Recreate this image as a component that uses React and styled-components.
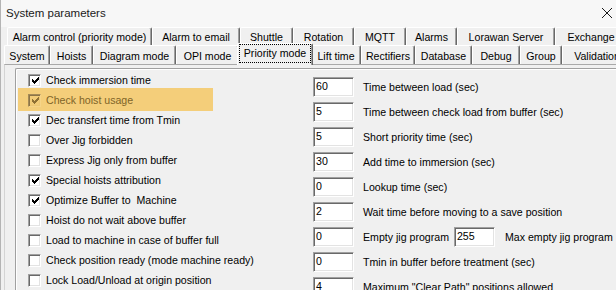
import React from 'react';
import styled, { createGlobalStyle } from 'styled-components';

const GlobalStyle = createGlobalStyle`
  html, body {
    margin: 0;
    padding: 0;
    background: #f0f0f0;
  }
  #root {
    width: 616px;
    height: 290px;
    overflow: hidden;
  }
`;

const Window = styled.div`
  width: 616px;
  height: 290px;
  box-sizing: border-box;
  background: #f0f0f0;
  border-left: 1px solid #b4b4b4;
  display: flex;
  flex-direction: column;
  overflow: hidden;
  font-family: "Liberation Sans", Arial, sans-serif;
  font-size: 10.6px;
  color: #000;
`;

const TitleBar = styled.div`
  flex: none;
  height: 27px;
  box-sizing: border-box;
  padding: 0 3px 1px 5px;
  display: flex;
  align-items: center;
  justify-content: space-between;
  background: #f7f7f7;
`;

const Title = styled.span`
  font-size: 11.5px;
  color: #1a1a1a;
`;

const TabStrip = styled.div`
  flex: none;
  display: flex;
  flex-direction: column;
`;

const TabRow = styled.div`
  display: flex;
  height: ${p => p.$h}px;
  padding-left: ${p => p.$indent}px;
  white-space: nowrap;
`;

const Tab = styled.div`
  flex: none;
  box-sizing: border-box;
  width: ${p => p.$w}px;
  height: 100%;
  border-top: 1px solid #fff;
  border-left: 1px solid #fff;
  border-right: 1px solid #696969;
  box-shadow: inset -1px 0 #a0a0a0;
  border-radius: 2px 2px 0 0;
  display: flex;
  align-items: center;
  justify-content: center;
  padding-top: 1px;
`;

const ActiveTab = styled(Tab)`
  position: relative;
  z-index: 2;
  width: ${p => p.$w + 4}px;
  height: 22px;
  margin: -2px -2px 0 -2px;
  padding: 0 1px 2px 1px;
  background: #f0f0f0;
  align-items: stretch;
`;

const FocusLabel = styled.span`
  flex: 1;
  border: 1px dotted #000;
  display: flex;
  align-items: center;
  justify-content: center;
  padding-bottom: 2px;
`;

const Panel = styled.div`
  flex: 1;
  margin-left: 3px;
  border-top: 1px solid #a9a9a9;
  border-left: 1px solid #d4d4d4;
  padding: 3px 0 0 10px;
  display: flex;
`;

const GroupBox = styled.div`
  flex: 1;
  border-top: 1px solid #a0a0a0;
  border-left: 1px solid #a0a0a0;
  box-shadow: inset 1px 1px #fff;
  border-top-left-radius: 2px;
  padding: 1px 0 0 2px;
  display: grid;
  grid-template-columns: 195px auto;
  column-gap: 100px;
  align-items: start;
`;

const CheckList = styled.div`
  display: flex;
  flex-direction: column;
`;

const CheckRow = styled.div`
  height: 20px;
  display: flex;
  align-items: center;
  padding-left: 10px;
  white-space: nowrap;
  ${p => p.$highlight && `
    height: 23px;
    margin: -2px 0 -1px 0;
    padding-top: 2px;
    padding-bottom: 1px;
    box-sizing: border-box;
    background: #f4ce7a;
    color: #7f6428;
  `}
`;

const Box = styled.span`
  flex: none;
  width: 13px;
  height: 13px;
  box-sizing: border-box;
  border-top: 1px solid ${p => p.$highlight ? '#a48a57' : '#a0a0a0'};
  border-left: 1px solid ${p => p.$highlight ? '#a48a57' : '#a0a0a0'};
  border-right: 1px solid ${p => p.$highlight ? '#f6d488' : '#fff'};
  border-bottom: 1px solid ${p => p.$highlight ? '#f6d488' : '#fff'};
  box-shadow: inset 1px 1px ${p => p.$highlight ? '#8c7446' : '#696969'},
    inset -1px -1px ${p => p.$highlight ? '#ecc775' : '#e3e3e3'};
  background: ${p => p.$highlight ? '#f2cc78' : '#fff'};
  display: flex;
  align-items: center;
  justify-content: center;
  padding: 1px 0 0 1px;
`;

const CheckText = styled.span`
  margin-left: 5px;
`;

const FieldList = styled.div`
  padding-top: 7px;
  display: flex;
  flex-direction: column;
  gap: 5px;
`;

const FieldRow = styled.div`
  height: 20px;
  display: flex;
  align-items: center;
  white-space: nowrap;
`;

const TextBox = styled.span`
  flex: none;
  width: 41px;
  height: 20px;
  box-sizing: border-box;
  margin-left: ${p => p.$gap || 0}px;
  border-top: 1px solid #a0a0a0;
  border-left: 1px solid #a0a0a0;
  border-right: 1px solid #fff;
  border-bottom: 1px solid #fff;
  box-shadow: inset 1px 1px #696969, inset -1px -1px #e3e3e3;
  background: #fff;
  padding: 2px 0 0 2px;
  line-height: 12px;
`;

const FieldText = styled.span`
  margin-left: ${p => p.$gap}px;
`;

function CheckMark({ color }) {
  return (
    <svg width="7" height="7" viewBox="0 0 7 7" shapeRendering="crispEdges">
      <path
        fill={color}
        d="M6 0h1v1h-1z M5 1h2v1h-2z M0 2h1v1h-1z M4 2h3v1h-3z M0 3h2v1h-2z M3 3h3v1h-3z M0 4h5v1h-5z M1 5h3v1h-3z M2 6h1v1h-1z"
      />
    </svg>
  );
}

function CloseIcon() {
  return (
    <svg width="12" height="12" viewBox="0 0 12 12">
      <path d="M1 1L11 11M11 1L1 11" stroke="#1a1a1a" strokeWidth="1" />
    </svg>
  );
}

const topTabs = [
  ['Alarm control (priority mode)', 145],
  ['Alarm to email', 88],
  ['Shuttle', 53],
  ['Rotation', 61],
  ['MQTT', 52],
  ['Alarms', 51],
  ['Lorawan Server', 98],
  ['Exchange', 72],
];

const bottomTabs = [
  ['System', 46],
  ['Hoists', 43],
  ['Diagram mode', 83],
  ['OPI mode', 63],
  ['Priority mode', 72, true],
  ['Lift time', 50],
  ['Rectifiers', 54],
  ['Database', 57],
  ['Debug', 48],
  ['Group', 42],
  ['Validation', 70],
];

const checks = [
  ['Check immersion time', true],
  ['Check hoist usage', true, true],
  ['Dec transfert time from Tmin', true],
  ['Over Jig forbidden', false],
  ['Express Jig only from buffer', false],
  ['Special hoists attribution', true],
  ['Optimize Buffer to \u00a0Machine', true],
  ['Hoist do not wait above buffer', false],
  ['Load to machine in case of buffer full', false],
  ['Check position ready (mode machine ready)', false],
  ['Lock Load/Unload at origin position', false],
];

const fields = [
  ['60', 'Time between load (sec)'],
  ['5', 'Time between check load from buffer (sec)'],
  ['5', 'Short priority time (sec)'],
  ['30', 'Add time to immersion (sec)'],
  ['0', 'Lookup time (sec)'],
  ['2', 'Wait time before moving to a save position'],
  ['0', 'Empty jig program', '255', 'Max empty jig program'],
  ['0', 'Tmin in buffer before treatment (sec)'],
  ['4', 'Maximum "Clear Path" positions allowed'],
];

export default function App() {
  return (
    <>
      <GlobalStyle />
      <Window>
        <TitleBar>
          <Title>System parameters</Title>
          <CloseIcon />
        </TitleBar>
        <TabStrip>
          <TabRow $h={18} $indent={6}>
            {topTabs.map(([label, w]) => (
              <Tab key={label} $w={w}>{label}</Tab>
            ))}
          </TabRow>
          <TabRow $h={19} $indent={3}>
            {bottomTabs.map(([label, w, active]) =>
              active ? (
                <ActiveTab key={label} $w={w}>
                  <FocusLabel>{label}</FocusLabel>
                </ActiveTab>
              ) : (
                <Tab key={label} $w={w}>{label}</Tab>
              )
            )}
          </TabRow>
        </TabStrip>
        <Panel>
          <GroupBox>
            <CheckList>
              {checks.map(([label, checked, hl]) => (
                <CheckRow key={label} $highlight={hl}>
                  <Box $highlight={hl}>
                    {checked && <CheckMark color={hl ? '#8f7033' : '#000'} />}
                  </Box>
                  <CheckText>{label}</CheckText>
                </CheckRow>
              ))}
            </CheckList>
            <FieldList>
              {fields.map(([value, label, value2, label2]) => (
                <FieldRow key={label}>
                  <TextBox>{value}</TextBox>
                  <FieldText $gap={9}>{label}</FieldText>
                  {value2 && <TextBox $gap={5}>{value2}</TextBox>}
                  {label2 && <FieldText $gap={10}>{label2}</FieldText>}
                </FieldRow>
              ))}
            </FieldList>
          </GroupBox>
        </Panel>
      </Window>
    </>
  );
}
